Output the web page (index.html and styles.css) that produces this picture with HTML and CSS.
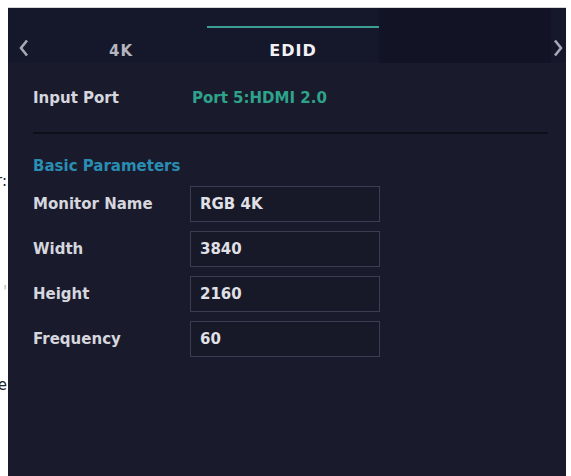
FILE: index.html
```html
<!DOCTYPE html>
<html lang="en">
<head>
  <meta charset="UTF-8" />
  <meta name="viewport" content="width=device-width, initial-scale=1.0" />
  <title>EDID Settings</title>
  <link rel="stylesheet" href="styles.css">
</head>
<body>
  <div class="page-edge">
    <span class="edge-text edge-1">r:</span>
    <span class="edge-text edge-2">'</span>
    <span class="edge-text edge-3">e</span>
  </div>
  <div class="panel">
    <div class="tab-bar">
      <div class="nav-arrow nav-left">
        <svg width="10" height="18" viewBox="0 0 10 18"><path d="M8 1.5 L2 9 L8 16.5" fill="none" stroke="#a7a8b4" stroke-width="2.6"/></svg>
      </div>
      <div class="tab"><span class="tab-label">4K</span></div>
      <div class="tab active"><span class="tab-label">EDID</span></div>
      <div class="tab dim"><span class="tab-label"></span></div>
      <div class="nav-arrow nav-right">
        <svg width="10" height="18" viewBox="0 0 10 18"><path d="M2 1.5 L8 9 L2 16.5" fill="none" stroke="#a7a8b4" stroke-width="2.6"/></svg>
      </div>
    </div>

    <div class="content">
      <div class="row port-row">
        <span class="label">Input Port</span>
        <span class="port-value">Port 5:HDMI 2.0</span>
      </div>
      <div class="divider"></div>

      <div class="section-title">Basic Parameters</div>

      <div class="row">
        <span class="label">Monitor Name</span>
        <div class="field">RGB 4K</div>
      </div>
      <div class="row">
        <span class="label">Width</span>
        <div class="field">3840</div>
      </div>
      <div class="row">
        <span class="label">Height</span>
        <div class="field">2160</div>
      </div>
      <div class="row">
        <span class="label">Frequency</span>
        <div class="field">60</div>
      </div>
    </div>
  </div>
</body>
</html>
```

FILE: styles.css
```css
* {
  box-sizing: border-box;
}
body {
  margin: 0;
  height: 100vh;
  background: #fff;
  font-family: 'DejaVu Sans', Verdana, sans-serif;
  display: flex;
  overflow: hidden;
}
.page-edge {
  width: 8px;
  position: relative;
  overflow: hidden;
}
.edge-text {
  position: absolute;
  right: 1px;
  font-size: 15px;
  color: #222;
}
.edge-1 { top: 172px; }
.edge-2 { top: 283px; color: #bbb; }
.edge-3 { top: 376px; }
.panel {
  width: 558px;
  margin-top: 7px;
  background: #191b2c;
  border-top: 1px solid #d6d6da;
  display: flex;
  flex-direction: column;
}
.tab-bar {
  display: flex;
  height: 55px;
  background: #15172a;
}
.nav-arrow {
  display: flex;
  align-items: center;
  padding-top: 24px;
}
.nav-left {
  width: 27px;
  padding-left: 11px;
}
.nav-right {
  width: 15px;
  padding-left: 2px;
}
.tab {
  width: 172px;
  display: flex;
  flex-direction: column;
  align-items: center;
  padding-top: 18px;
}
.tab::before {
  content: "";
  align-self: stretch;
  height: 2px;
}
.tab.active::before {
  background: #3a9f92;
}
.tab.dim {
  background: #121425;
}
.tab-label {
  margin-top: 14px;
  font-size: 15px;
  font-weight: bold;
  letter-spacing: 1px;
  color: #b4b5bf;
  line-height: 18px;
  height: 18px;
}
.tab.active .tab-label {
  color: #f2f2f6;
  font-size: 16px;
}
.content {
  padding: 20px 18px 0 25px;
  display: flex;
  flex-direction: column;
}
.row {
  display: flex;
  align-items: center;
  height: 36px;
  margin-bottom: 9px;
}
.port-row {
  height: 30px;
  margin-bottom: 0;
}
.label {
  width: 157px;
  font-size: 15px;
  font-weight: bold;
  color: #d6d6de;
}
.port-value {
  padding-left: 2px;
  font-size: 15px;
  font-weight: bold;
  color: #2ea38b;
}
.divider {
  height: 2px;
  background: #0e1019;
  margin: 19px 0 0 0;
}
.section-title {
  margin: 23px 0 11px 0;
  font-size: 15px;
  font-weight: bold;
  color: #2a8db2;
  line-height: 18px;
}
.field {
  width: 190px;
  height: 36px;
  border: 1px solid #3b3e52;
  background: #171929;
  padding-left: 9px;
  display: flex;
  align-items: center;
  font-size: 15px;
  font-weight: bold;
  color: #e0e0e6;
}
```
